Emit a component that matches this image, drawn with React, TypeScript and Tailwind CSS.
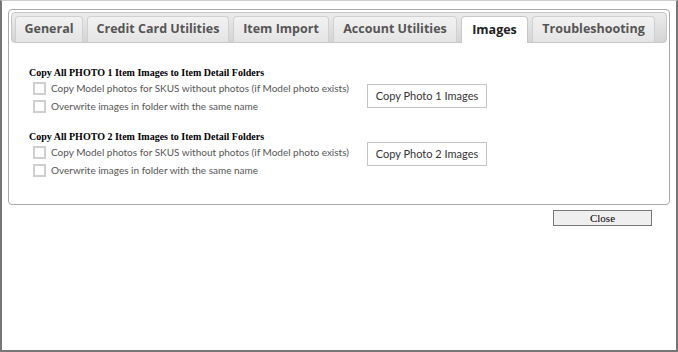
const tabs = [
  { label: "General", w: "w-[68px]" },
  { label: "Credit Card Utilities", w: "w-[142px]" },
  { label: "Item Import", w: "w-[96px]" },
  { label: "Account Utilities", w: "w-[124px]" },
  { label: "Images", w: "w-[67px]", active: true },
  { label: "Troubleshooting", w: "w-[123px]" },
];

function Check({ label }: { label: string }) {
  return (
    <label className="flex h-[18px] items-center gap-[5px] whitespace-nowrap">
      <span className="box-border h-[13px] w-[13px] shrink-0 border-2 border-[#cfcfcf] bg-white" />
      <span className="font-['Lato',sans-serif] text-[10px] leading-[14px] text-[#555]">{label}</span>
    </label>
  );
}

function Section({ n, top, btn }: { n: number; top: string; btn: string }) {
  return (
    <div className={top}>
      <div className="whitespace-nowrap font-['Liberation_Serif',serif] text-[10px] font-bold leading-[13px] text-black">
        Copy All PHOTO {n} Item Images to Item Detail Folders
      </div>
      <div className="flex">
        <div className="flex w-[338px] flex-col pl-[4px]">
          <Check label="Copy Model photos for SKUS without photos (if Model photo exists)" />
          <Check label="Overwrite images in folder with the same name" />
        </div>
        <button
          className={`${btn} h-[24px] w-[120px] border border-[#c4c4c4] bg-white font-['Lato',sans-serif] text-[11px] text-[#333]`}
        >
          Copy Photo {n} Images
        </button>
      </div>
    </div>
  );
}

export default function App() {
  return (
    <div className="box-border h-[352px] w-[678px] border-t border-l-2 border-r-2 border-b-2 border-t-[#ccc] border-l-[#777] border-r-[#777] border-b-[#777] bg-white font-['Open_Sans',sans-serif]">
      <div className="ml-[6px] mt-[8px] box-border h-[196px] w-[662px] rounded-[4px] border border-[#aaa] p-[2px]">
        <div className="flex h-[31px] gap-[4px] rounded-[4px] border border-[#c8c8c8] bg-gradient-to-b from-[#ececec] to-[#d4d4d4] pl-[3px] pt-[3px]">
          {tabs.map((t) => (
            <div
              key={t.label}
              className={
                t.active
                  ? `${t.w} -mb-px flex items-center justify-center rounded-t-[4px] border border-b-0 border-[#c8c8c8] bg-white text-[12.5px] font-bold text-[#222]`
                  : `${t.w} flex items-center justify-center rounded-t-[4px] border border-b-0 border-[#d0d0d0] bg-gradient-to-b from-[#f2f2f2] to-[#e4e4e4] text-[12.5px] font-bold text-[#555]`
              }
            >
              {t.label}
            </div>
          ))}
        </div>
        <div className="pl-[18px]">
          <Section n={1} top="mt-[23px]" btn="mt-[5px]" />
          <Section n={2} top="mt-[15px]" btn="mt-[-1px]" />
        </div>
      </div>
      <div className="flex justify-end pr-[24px] pt-[5px]">
        <button className="box-border h-[16px] w-[99px] border border-[#777] bg-[#efefef] font-['Liberation_Serif',serif] text-[11px] leading-[14px] text-black">
          Close
        </button>
      </div>
    </div>
  );
}
